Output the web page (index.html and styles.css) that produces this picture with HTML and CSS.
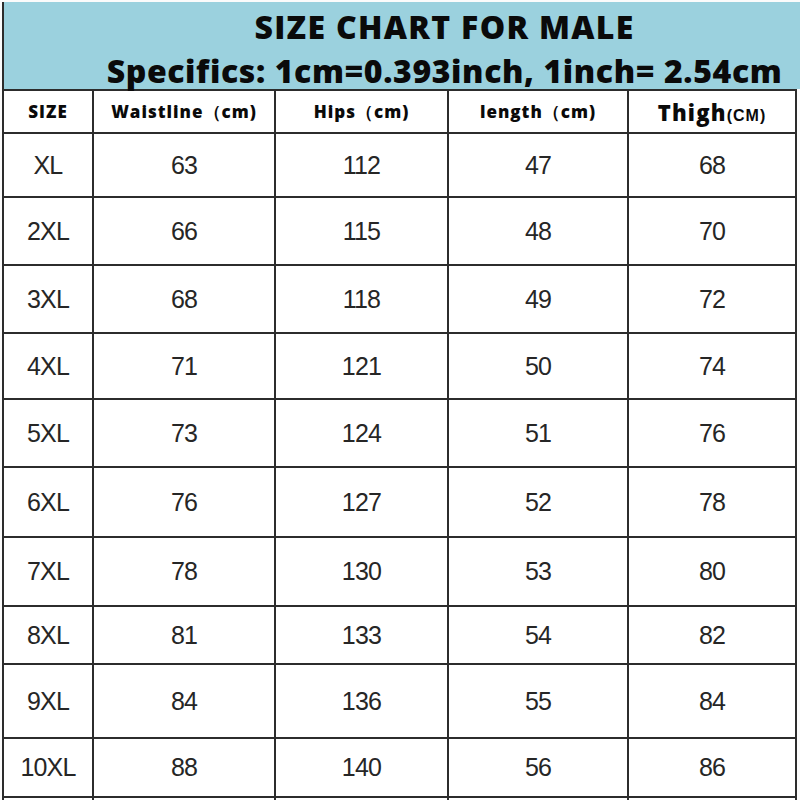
FILE: index.html
```html
<!DOCTYPE html>
<html>
<head>
<meta charset="utf-8">
<link rel="stylesheet" href="styles.css">
</head>
<body>
<div class="sheet">
  <div class="banner">
    <div class="banner-text">
      <div class="title">SIZE CHART FOR MALE</div>
      <div class="spec">Specifics: 1cm=0.393inch, 1inch= 2.54cm</div>
    </div>
  </div>
  <table class="chart">
    <colgroup>
      <col class="c1"><col class="c2"><col class="c3"><col class="c4"><col class="c5">
    </colgroup>
    <thead>
      <tr class="head">
        <th>SIZE</th>
        <th>Waistline（cm)</th>
        <th>Hips（cm)</th>
        <th>length（cm)</th>
        <th><span class="thigh">Thigh</span><span class="unit">(CM)</span></th>
      </tr>
    </thead>
    <tbody>
      <tr><td>XL</td><td>63</td><td>112</td><td>47</td><td>68</td></tr>
      <tr><td>2XL</td><td>66</td><td>115</td><td>48</td><td>70</td></tr>
      <tr><td>3XL</td><td>68</td><td>118</td><td>49</td><td>72</td></tr>
      <tr><td>4XL</td><td>71</td><td>121</td><td>50</td><td>74</td></tr>
      <tr><td>5XL</td><td>73</td><td>124</td><td>51</td><td>76</td></tr>
      <tr><td>6XL</td><td>76</td><td>127</td><td>52</td><td>78</td></tr>
      <tr><td>7XL</td><td>78</td><td>130</td><td>53</td><td>80</td></tr>
      <tr><td>8XL</td><td>81</td><td>133</td><td>54</td><td>82</td></tr>
      <tr><td>9XL</td><td>84</td><td>136</td><td>55</td><td>84</td></tr>
      <tr><td>10XL</td><td>88</td><td>140</td><td>56</td><td>86</td></tr>
      <tr class="cut"><td></td><td></td><td></td><td></td><td></td></tr>
    </tbody>
  </table>
</div>
</body>
</html>
```

FILE: styles.css
```css
html, body {
  margin: 0;
  padding: 0;
  background: #ffffff;
  overflow: hidden;
}

.sheet {
  width: 800px;
  height: 800px;
  padding-top: 2px;
  box-sizing: border-box;
  background: #fbfbfb;
  overflow: hidden;
}

.banner {
  margin-left: 2px;
  height: 87px;
  background: #9bd1de;
  border-left: 2px solid #2c2c2c;
  padding-left: 89px;
  box-sizing: border-box;
  display: flex;
}

.banner-text {
  width: 703px;
  display: flex;
  flex-direction: column;
  align-items: center;
  font-family: "Open Sans", "Noto Sans", sans-serif;
  font-weight: 800;
  color: #0a0a0a;
}

.title {
  font-size: 32px;
  line-height: 36px;
  margin-top: 7px;
  letter-spacing: 1.3px;
}

.spec {
  font-size: 32px;
  line-height: 36px;
  margin-top: 8px;
  letter-spacing: 0.6px;
  white-space: nowrap;
}

.chart {
  margin-left: 2px;
  border-collapse: collapse;
  table-layout: fixed;
  width: 795px;
  background: #ffffff;
}

.c1 { width: 90px; }
.c2 { width: 182px; }
.c3 { width: 173px; }
.c4 { width: 180px; }
.c5 { width: 168px; }

.chart th,
.chart td {
  border: 2px solid #2c2c2c;
  padding: 0;
  text-align: center;
  vertical-align: middle;
  color: #1a1a1a;
}

.chart th {
  font-family: "Open Sans", "Noto Sans", sans-serif;
  font-weight: 800;
  font-size: 17px;
  letter-spacing: 1px;
  color: #0a0a0a;
  white-space: nowrap;
}

.chart .thigh {
  font-family: "Open Sans", "Noto Sans", sans-serif;
  font-size: 22px;
  font-weight: 800;
  letter-spacing: 1.2px;
}

.chart .unit {
  font-family: "Liberation Sans", Arial, sans-serif;
  font-size: 16px;
  font-weight: 700;
  letter-spacing: 1px;
}

.chart td {
  font-family: "Liberation Sans", Arial, sans-serif;
  font-size: 25px;
  letter-spacing: -0.8px;
  color: #262626;
}

.head { height: 43px; }
tbody tr:nth-child(1) { height: 64px; }
tbody tr:nth-child(2) { height: 68px; }
tbody tr:nth-child(3) { height: 68px; }
tbody tr:nth-child(4) { height: 66px; }
tbody tr:nth-child(5) { height: 68px; }
tbody tr:nth-child(6) { height: 70px; }
tbody tr:nth-child(7) { height: 69px; }
tbody tr:nth-child(8) { height: 58px; }
tbody tr:nth-child(9) { height: 74px; }
tbody tr:nth-child(10) { height: 59px; }
tbody tr.cut { height: 20px; }
```
